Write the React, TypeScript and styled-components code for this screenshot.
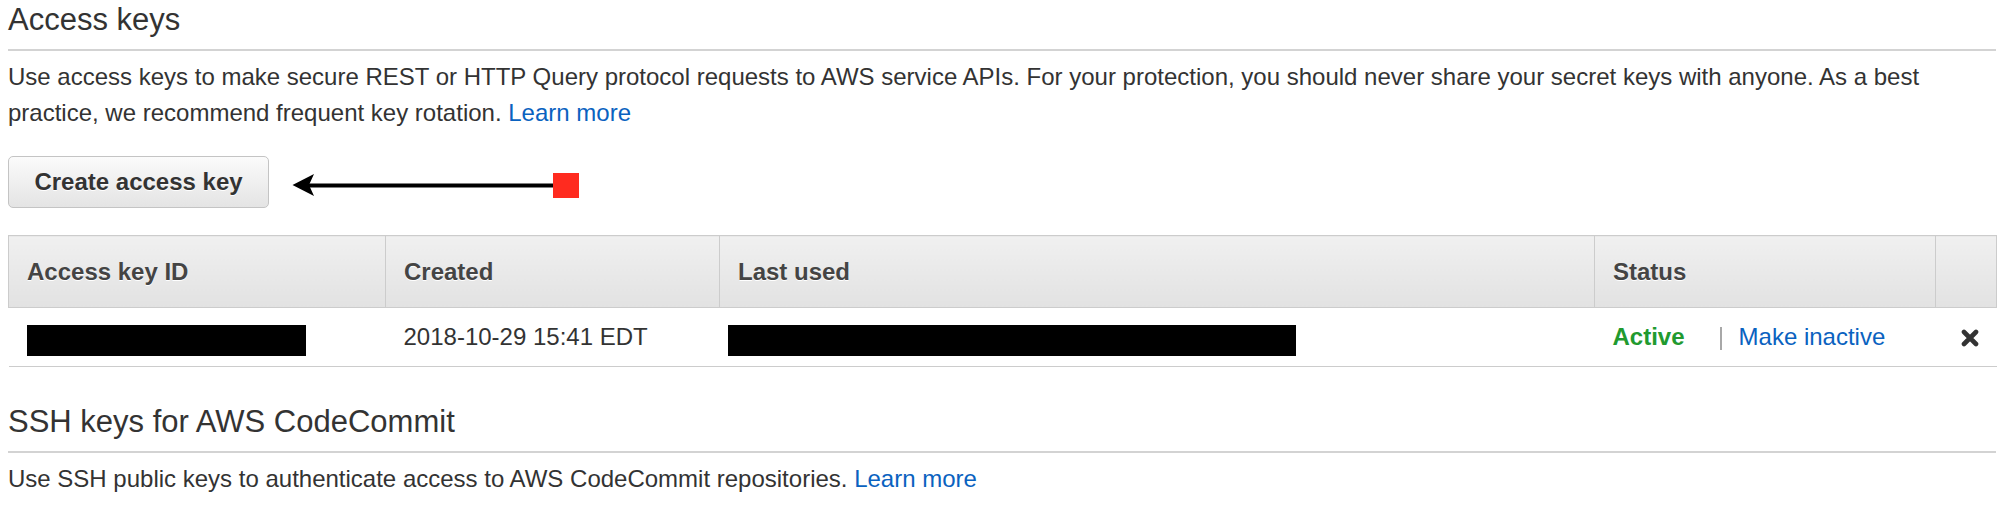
import React from "react";
import styled, { createGlobalStyle } from "styled-components";

const GlobalStyle = createGlobalStyle`
  html, body {
    margin: 0;
    padding: 0;
    background: #ffffff;
  }
  body {
    font-family: "Liberation Sans", Arial, Helvetica, sans-serif;
    color: #333333;
  }
`;

const Page = styled.div`
  padding: 2px 16px 0 8px;
  box-sizing: border-box;
  width: 2012px;
`;

const Section = styled.section<{ $gap?: number }>`
  margin-top: ${(p) => p.$gap ?? 0}px;
`;

const Title = styled.h2`
  margin: 0;
  padding-bottom: 11px;
  border-bottom: 2px solid #d3d3d3;
  font-size: 31px;
  line-height: 36px;
  font-weight: normal;
  color: #333333;
`;

const Text = styled.p`
  margin: 8px 0 0;
  font-size: 24px;
  line-height: 36px;
  color: #333333;
`;

const Link = styled.a`
  color: #0a62c0;
  text-decoration: none;
  cursor: pointer;
`;

const ButtonRow = styled.div`
  display: flex;
  align-items: flex-start;
  margin-top: 25px;
`;

const Button = styled.button`
  box-sizing: border-box;
  height: 52px;
  width: 261px;
  padding: 0;
  border: 1px solid #c4c4c4;
  border-radius: 5px;
  background: linear-gradient(#fbfbfb, #e4e4e4);
  font-family: inherit;
  font-size: 24px;
  font-weight: bold;
  color: #333333;
  text-shadow: 0 1px 0 #ffffff;
  cursor: pointer;
`;

const Arrow = styled.svg`
  display: block;
  margin: 17px 0 0 23px;
`;

const Table = styled.table`
  margin-top: 27px;
  width: 1988px;
  border-collapse: collapse;
  table-layout: fixed;
  font-size: 24px;
`;

const HeadCell = styled.th`
  box-sizing: border-box;
  height: 72px;
  padding: 0 0 0 18px;
  text-align: left;
  vertical-align: middle;
  font-weight: bold;
  color: #444444;
  text-shadow: 0 1px 0 #ffffff;
  border: 1px solid #cccccc;
  background: linear-gradient(#f0f0f0, #e2e2e2);
`;

const Row = styled.tr`
  border-bottom: 1px solid #cccccc;
`;

const Cell = styled.td<{ $pad?: number }>`
  box-sizing: border-box;
  height: 59px;
  padding: 0 0 0 ${(p) => p.$pad ?? 18}px;
  vertical-align: middle;
  color: #333333;
  white-space: nowrap;
`;

const Redacted = styled.div<{ $w: number }>`
  width: ${(p) => p.$w}px;
  height: 31px;
  margin-top: 6px;
  background: #000000;
`;

const StatusWrap = styled.div`
  display: flex;
  align-items: center;
`;

const Active = styled.span`
  color: #219a2f;
  font-weight: bold;
`;

const Separator = styled.span`
  display: inline-block;
  width: 2px;
  height: 23px;
  margin: 2px 17px 0 35px;
  background: #a8a8a8;
`;

const DeleteIcon = styled.svg`
  display: block;
  margin-top: 2px;
`;

export default function App() {
  return (
    <>
      <GlobalStyle />
      <Page>
        <Section>
          <Title>Access keys</Title>
          <Text>
            Use access keys to make secure REST or HTTP Query protocol requests to AWS service
            APIs. For your protection, you should never share your secret keys with anyone. As a
            best practice, we recommend frequent key rotation. <Link>Learn more</Link>
          </Text>
          <ButtonRow>
            <Button>Create access key</Button>
            <Arrow width="287" height="26" viewBox="0 0 287 26">
              <line x1="16" y1="12.5" x2="262" y2="12.5" stroke="#000" strokeWidth="4" />
              <polygon points="0.5,12 22,1 17,12 22,23" fill="#000" />
              <rect x="261" y="0" width="26" height="25" fill="#ff2b1f" />
            </Arrow>
          </ButtonRow>
          <Table>
            <colgroup>
              <col style={{ width: 377 }} />
              <col style={{ width: 334 }} />
              <col style={{ width: 875 }} />
              <col style={{ width: 341 }} />
              <col style={{ width: 61 }} />
            </colgroup>
            <thead>
              <tr>
                <HeadCell>Access key ID</HeadCell>
                <HeadCell>Created</HeadCell>
                <HeadCell>Last used</HeadCell>
                <HeadCell>Status</HeadCell>
                <HeadCell />
              </tr>
            </thead>
            <tbody>
              <Row>
                <Cell>
                  <Redacted $w={279} />
                </Cell>
                <Cell>2018-10-29 15:41 EDT</Cell>
                <Cell $pad={8}>
                  <Redacted $w={568} />
                </Cell>
                <Cell>
                  <StatusWrap>
                    <Active>Active</Active>
                    <Separator />
                    <Link>Make inactive</Link>
                  </StatusWrap>
                </Cell>
                <Cell $pad={25}>
                  <DeleteIcon width="18" height="18" viewBox="0 0 18 18">
                    <path
                      d="M3 3 L15 15 M15 3 L3 15"
                      stroke="#333"
                      strokeWidth="4.6"
                      strokeLinecap="round"
                    />
                  </DeleteIcon>
                </Cell>
              </Row>
            </tbody>
          </Table>
        </Section>
        <Section $gap={37}>
          <Title>SSH keys for AWS CodeCommit</Title>
          <Text>
            Use SSH public keys to authenticate access to AWS CodeCommit repositories.{" "}
            <Link>Learn more</Link>
          </Text>
        </Section>
      </Page>
    </>
  );
}
